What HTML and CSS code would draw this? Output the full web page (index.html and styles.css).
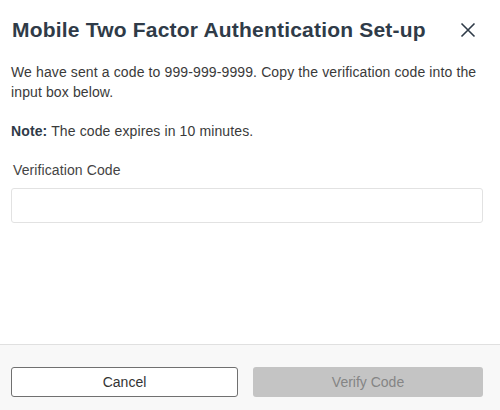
FILE: index.html
```html
<!DOCTYPE html>
<html>
<head>
<meta charset="utf-8">
<link rel="stylesheet" href="styles.css">
</head>
<body>
<div class="modal">
  <div class="content">
    <div class="header">
      <h1 class="title">Mobile Two Factor Authentication Set-up</h1>
      <svg class="close" width="16" height="16" viewBox="0 0 16 16"><path d="M1.5 1.5 L14.5 14.5 M14.5 1.5 L1.5 14.5" stroke="#2f3b48" stroke-width="1.6" fill="none"/></svg>
    </div>
    <p class="msg">We have sent a code to 999-999-9999. Copy the verification code into the input box below.</p>
    <p class="note"><b>Note:</b> The code expires in 10 minutes.</p>
    <label class="label">Verification Code</label>
    <div class="input"></div>
  </div>
  <div class="footer">
    <div class="btn cancel">Cancel</div>
    <div class="btn verify">Verify Code</div>
  </div>
</div>
</body>
</html>
```
FILE: styles.css
```css
html, body { margin: 0; padding: 0; background: #fff; }
body { font-family: "Liberation Sans", Arial, sans-serif; width: 500px; height: 410px; overflow: hidden; }
.modal { display: flex; flex-direction: column; height: 410px; }
.content { flex: 1; padding: 0 17px 0 11px; }
.header { display: flex; align-items: center; justify-content: space-between; height: 60px; }
.title { margin: 0; font-size: 21px; letter-spacing: 0.2px; font-weight: bold; color: #2f3b48; padding-left: 1px; }
.close { margin-right: 7px; }
.msg { margin: 0; font-size: 14px; letter-spacing: 0.12px; line-height: 20px; color: #3a3a3a; padding-top: 2px; }
.note { margin: 19px 0 0; font-size: 14px; letter-spacing: 0.12px; line-height: 20px; color: #3a3a3a; }
.note b { color: #2f3b48; }
.label { display: block; margin: 19px 0 0 2px; font-size: 14px; letter-spacing: 0.1px; line-height: 20px; color: #444; }
.input { margin-top: 8px; height: 33px; border: 1px solid #e2e2e2; border-radius: 3px; }
.footer { height: 66px; background: #f8f8f8; border-top: 1px solid #e0e0e0; display: flex; gap: 15px; padding: 22px 17px 0 11px; box-sizing: border-box; }
.btn { height: 30px; box-sizing: border-box; border-radius: 3px; display: flex; align-items: center; justify-content: center; font-size: 14px; }
.cancel { flex: 0 0 227px; background: #fff; border: 1px solid #707070; color: #333; }
.verify { flex: 1; background: #c4c4c4; color: #858585; }
```
